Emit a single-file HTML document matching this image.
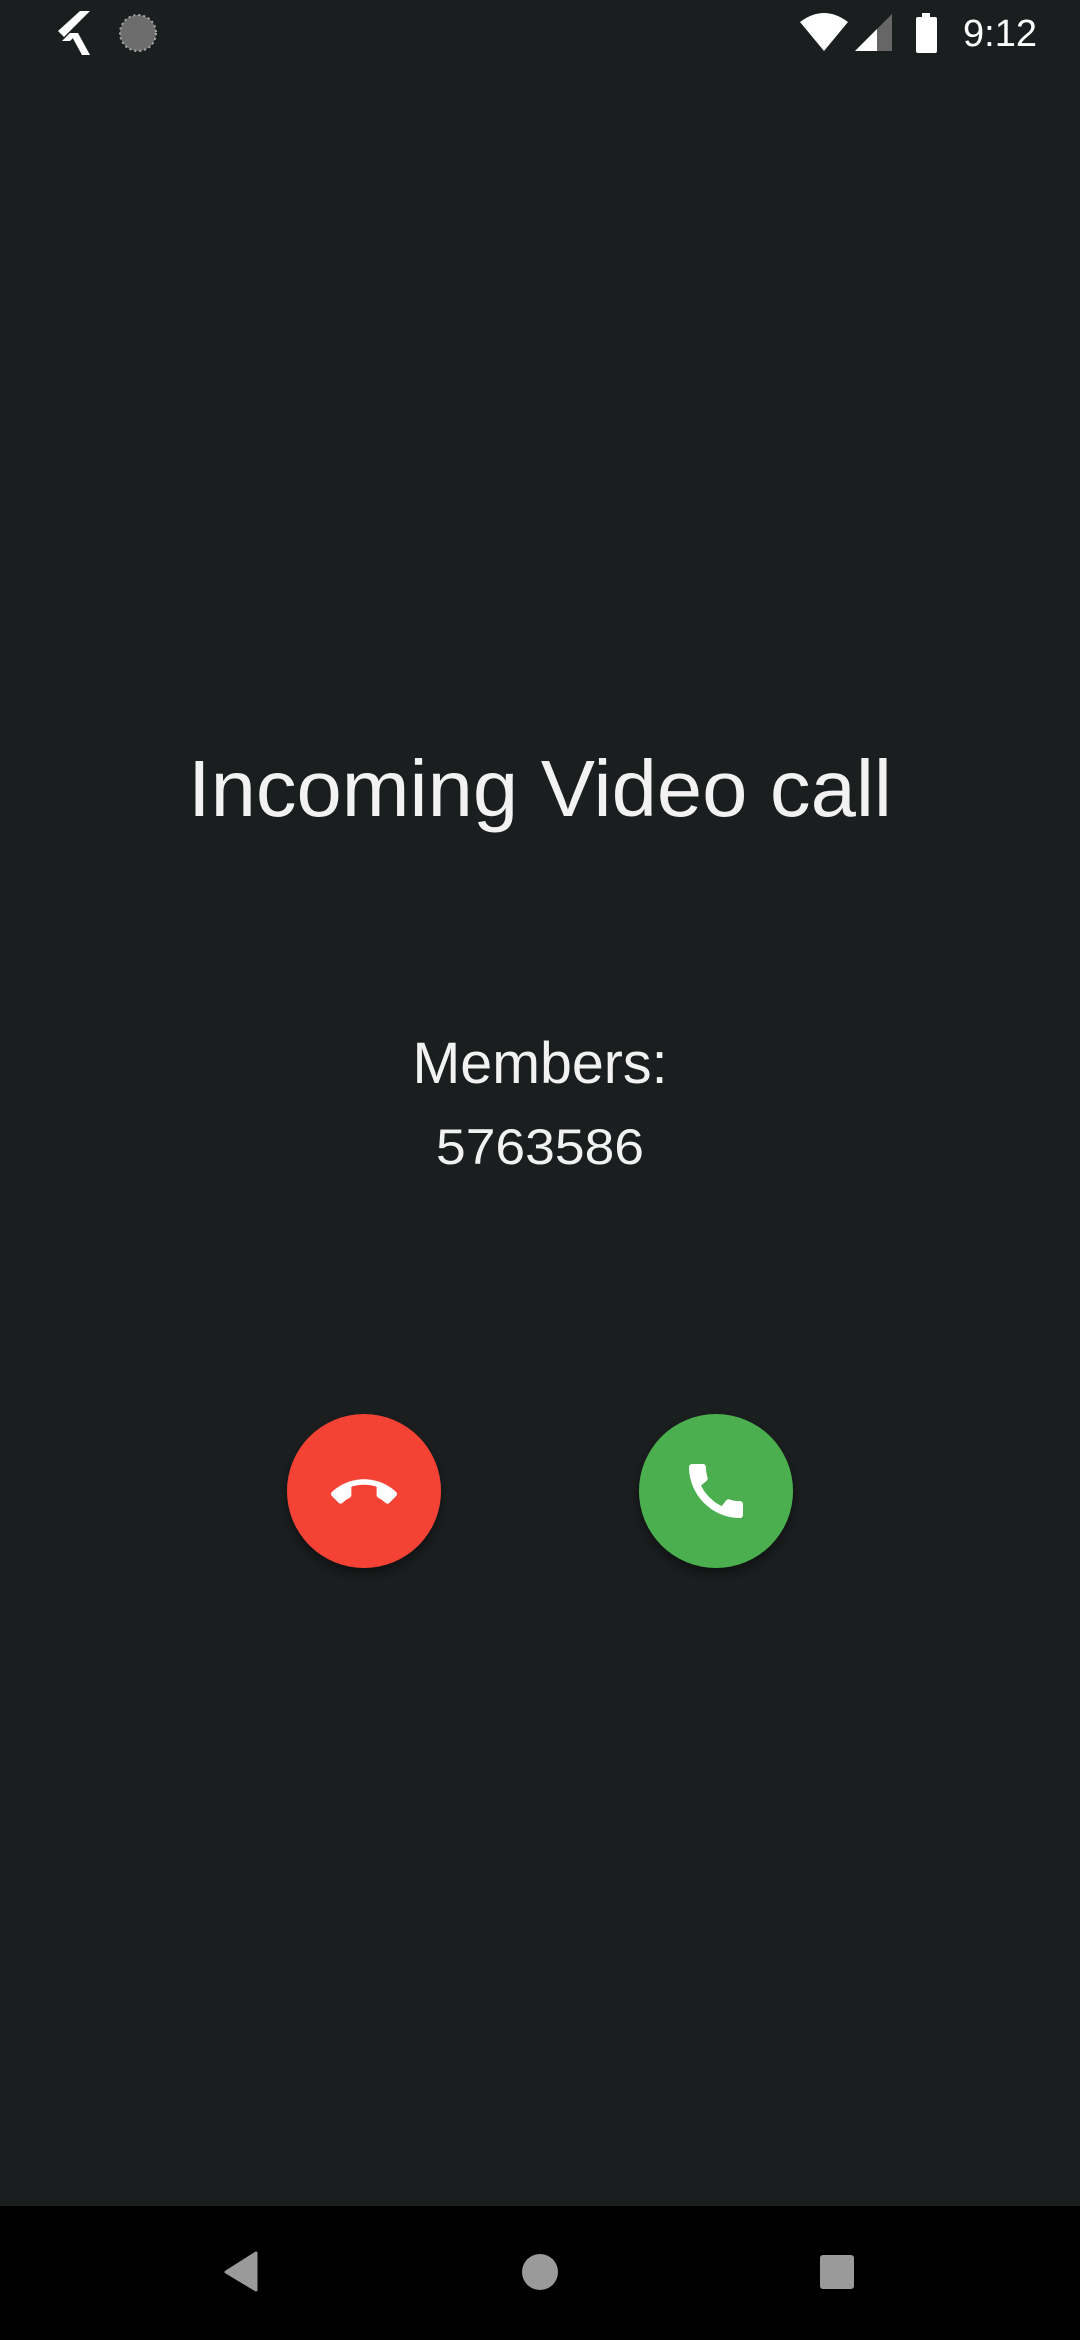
<!DOCTYPE html>
<html><head><meta charset="utf-8"><style>
html,body{margin:0;padding:0;width:1080px;height:2340px;background:#1b1e1f;overflow:hidden}
svg{position:absolute;left:0;top:0}
</style></head><body>
<svg width="1080" height="2340" viewBox="0 0 1080 2340" xmlns="http://www.w3.org/2000/svg">
<defs>
<filter id="sh" x="-30%" y="-30%" width="160%" height="170%"><feDropShadow dx="0" dy="6" stdDeviation="6" flood-color="#000" flood-opacity="0.45"/></filter>
</defs>
<rect width="1080" height="2340" fill="#1b1e1f"/>
<!-- status bar -->
<g fill="#fff">
<path d="M80 11 L90 11 L64 37 L58 31 Z"/>
<path d="M70 33 L78 33 L90 55 L82 55 Z"/>
<path d="M62 41 L70 33 L78 33 L70 41 Z"/>
</g>
<circle cx="138" cy="33" r="18" fill="#6d6d6d"/>
<circle cx="138" cy="33" r="18" fill="none" stroke="#aaa" stroke-width="2" stroke-dasharray="2 3"/>
<path d="M800 22 Q824 4 848 22 L824 51 Z" fill="#fff"/>
<path d="M855 51 L892 14 L892 51 Z" fill="#666"/>
<path d="M855 51 L877 29 L877 51 Z" fill="#fff"/>
<rect x="922" y="13" width="8" height="5" fill="#fff"/>
<rect x="916" y="17" width="21" height="36" rx="2" fill="#fff"/>
<text x="1037" y="46" font-family="Liberation Sans, sans-serif" font-size="38" fill="#fff" text-anchor="end">9:12</text>
<!-- texts -->
<text x="540" y="816" font-family="Liberation Sans, sans-serif" font-size="80" fill="#f2f2f2" text-anchor="middle" textLength="704" lengthAdjust="spacingAndGlyphs">Incoming Video call</text>
<text x="540" y="1083" font-family="Liberation Sans, sans-serif" font-size="58" fill="#f2f2f2" text-anchor="middle" textLength="255" lengthAdjust="spacingAndGlyphs">Members:</text>
<text x="540" y="1164" font-family="Liberation Sans, sans-serif" font-size="50" fill="#f2f2f2" text-anchor="middle" textLength="208" lengthAdjust="spacingAndGlyphs">5763586</text>
<!-- buttons -->
<circle cx="364" cy="1491" r="77" fill="#f44336" filter="url(#sh)"/>
<circle cx="716" cy="1491" r="77" fill="#4caf50" filter="url(#sh)"/>
<g transform="translate(331,1460) scale(2.75)" fill="#fff">
<path d="M12 9c-1.6 0-3.15.25-4.6.72v3.1c0 .39-.23.74-.56.9-.98.49-1.870 1.12-2.66 1.85-.18.18-.43.28-.7.28-.28 0-.53-.11-.71-.29L.29 13.08c-.18-.17-.29-.42-.29-.7 0-.28.11-.53.29-.71C3.34 8.78 7.46 7 12 7s8.66 1.78 11.71 4.67c.18.18.29.43.29.71 0 .28-.11.53-.29.71l-2.48 2.48c-.18.18-.43.29-.71.29-.27 0-.52-.11-.7-.28-.79-.74-1.69-1.36-2.67-1.85-.33-.16-.56-.5-.56-.9v-3.1C15.15 9.250 13.6 9 12 9z"/>
</g>
<g transform="translate(680,1455) scale(3)" fill="#fff">
<path d="M20.01 15.38c-1.23 0-2.42-.2-3.53-.56-.35-.12-.74-.03-1.01.24l-1.57 1.97c-2.83-1.35-5.48-3.9-6.89-6.83l1.950-1.66c.27-.28.35-.67.24-1.02-.37-1.11-.56-2.3-.56-3.53 0-.54-.45-.99-.99-.99H4.19C3.65 3 3 3.24 3 3.99 3 13.28 10.73 21 20.01 21c.71 0 .99-.63.99-1.18v-3.45c0-.54-.45-.99-.99-.99z"/>
</g>
<!-- nav bar -->
<rect x="0" y="2206" width="1080" height="134" fill="#000"/>
<path d="M256 2253 L256 2290 L226 2272 Z" fill="#9a9a9a" stroke="#9a9a9a" stroke-width="3" stroke-linejoin="round"/>
<circle cx="540" cy="2272" r="18" fill="#9a9a9a"/>
<rect x="820" y="2255" width="34" height="34" rx="3" fill="#9a9a9a"/>
</svg>
</body></html>
